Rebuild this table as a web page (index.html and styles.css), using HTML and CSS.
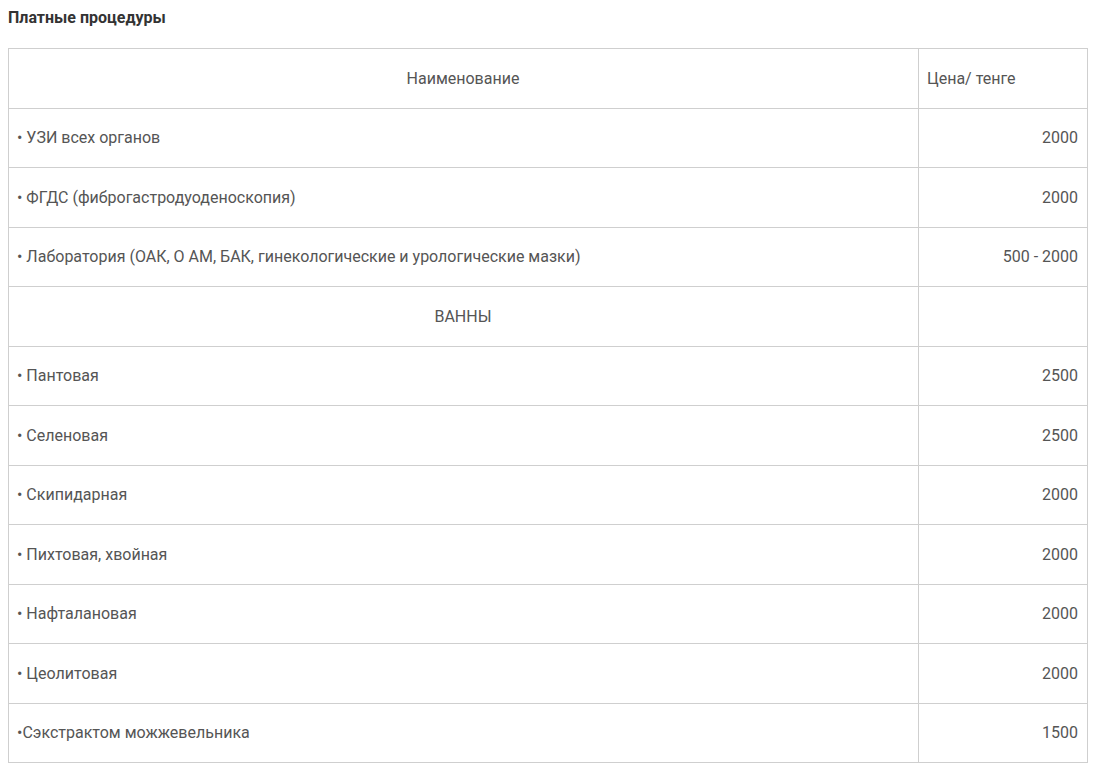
FILE: index.html
```html
<!DOCTYPE html>
<html lang="ru">
<head>
<meta charset="utf-8">
<link rel="stylesheet" href="styles.css">
</head>
<body>
<h3 class="title">Платные процедуры</h3>
<table class="price">
  <tr><td class="center">Наименование</td><td class="head-price">Цена/ тенге</td></tr>
  <tr><td>• УЗИ всех органов</td><td class="num">2000</td></tr>
  <tr><td>• ФГДС (фиброгастродуоденоскопия)</td><td class="num">2000</td></tr>
  <tr><td>• Лаборатория (ОАК, О АМ, БАК, гинекологические и урологические мазки)</td><td class="num">500 - 2000</td></tr>
  <tr><td class="center">ВАННЫ</td><td></td></tr>
  <tr><td>• Пантовая</td><td class="num">2500</td></tr>
  <tr><td>• Селеновая</td><td class="num">2500</td></tr>
  <tr><td>• Скипидарная</td><td class="num">2000</td></tr>
  <tr><td>• Пихтовая, хвойная</td><td class="num">2000</td></tr>
  <tr><td>• Нафталановая</td><td class="num">2000</td></tr>
  <tr><td>• Цеолитовая</td><td class="num">2000</td></tr>
  <tr><td>•Сэкстрактом можжевельника</td><td class="num">1500</td></tr>
</table>
</body>
</html>
```
FILE: styles.css
```css
html, body {
  margin: 0;
  background: #fff;
}
body {
  padding: 0 6px 0 8px;
  font-family: Roboto, "Noto Sans", sans-serif;
}
.title {
  margin: 0;
  padding-top: 8px;
  height: 48px;
  box-sizing: border-box;
  font-size: 16px;
  font-weight: 700;
  color: #333;
  line-height: 20px;
}
.price {
  width: 1080px;
  border-collapse: collapse;
  font-size: 16px;
  color: #555;
}
.price td {
  border: 1px solid #cfcfcf;
  height: 59.5px;
  padding: 0 9px 0 8px;
  box-sizing: border-box;
  vertical-align: middle;
}
.price td:first-child {
  width: 910px;
}
.price .center {
  text-align: center;
}
.price .num {
  text-align: right;
}
.price .head-price {
  text-align: left;
}
```
